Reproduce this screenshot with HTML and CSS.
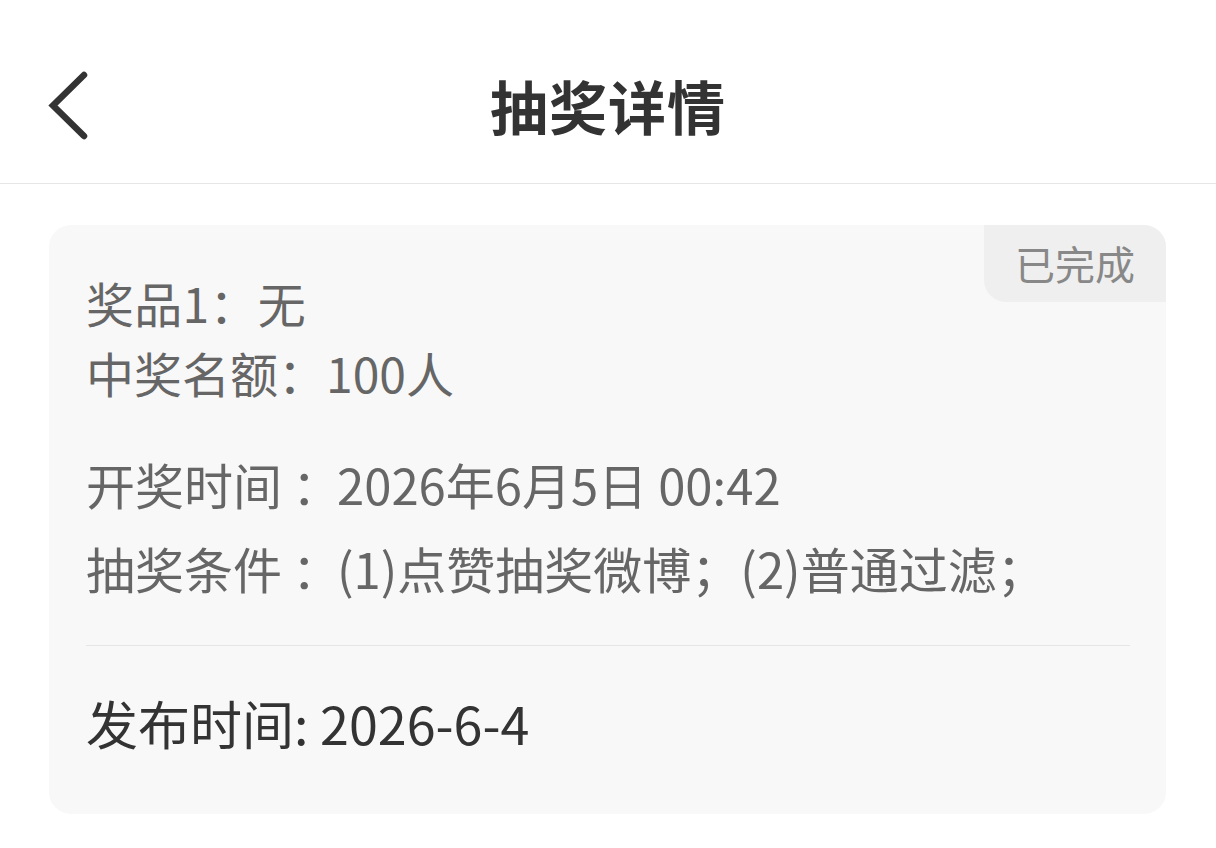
FILE: index.html
```html
<!DOCTYPE html>
<html lang="zh">
<head>
<meta charset="utf-8">
<link rel="stylesheet" href="styles.css">
</head>
<body>
<header class="nav">
  <a class="back" href="#" aria-label="返回">
    <svg width="44" height="70" viewBox="0 0 44 70"><path d="M38 4 L7 34.5 L38 65" fill="none" stroke="#333" stroke-width="6.5" stroke-linecap="round" stroke-linejoin="miter"/></svg>
  </a>
  <h1 class="title">抽奖详情</h1>
</header>
<main class="page">
  <section class="card">
    <span class="badge">已完成</span>
    <div class="group prize">
      <p class="row">奖品1：无</p>
      <p class="row">中奖名额：100人</p>
    </div>
    <div class="group info">
      <p class="row">开奖时间<span class="colon">：</span>2026年6月5日 00:42</p>
      <p class="row">抽奖条件<span class="colon">：</span>(1)点赞抽奖微博；(2)普通过滤；</p>
    </div>
    <div class="divider"></div>
    <p class="publish">发布时间: 2026-6-4</p>
  </section>
</main>
</body>
</html>
```
FILE: styles.css
```css
* { box-sizing: border-box; }
html, body { margin: 0; padding: 0; background: #fff; }
body {
  font-family: "Noto Sans CJK SC", "Noto Sans", sans-serif;
  color: #333;
}
.nav {
  height: 184px;
  border-bottom: 1px solid #e6e6e6;
  display: flex;
  align-items: center;
  justify-content: center;
  position: relative;
}
.back {
  position: absolute;
  left: 46px;
  top: 71px;
  display: block;
  width: 44px;
  height: 70px;
}
.back svg { display: block; }
.title {
  margin: 0;
  font-size: 58px;
  font-weight: 700;
  color: #333;
  letter-spacing: 1px;
  padding-top: 26px;
}
.page {
  padding: 41px 50px 0 49px;
}
.card {
  position: relative;
  background: #f8f8f8;
  border-radius: 22px;
  padding: 42px 36px 58px 37px;
}
.badge {
  position: absolute;
  top: 0;
  right: 0;
  width: 182px;
  height: 77px;
  background: #efefef;
  color: #888;
  font-size: 40px;
  line-height: 77px;
  text-align: center;
  border-radius: 0 22px 0 22px;
}
.row {
  margin: 0;
  font-size: 48px;
  color: #666;
}
.prize .row { line-height: 70px; }
.prize .row:first-child { letter-spacing: 0.3px; }
.info { margin-top: 35px; }
.info .row { line-height: 84px; font-size: 49px; }
.colon { font-family: "Noto Sans CJK JP", sans-serif; padding-left: 10px; margin-right: -4px; }
.divider {
  height: 1px;
  background: #e6e6e6;
  margin-top: 35px;
}
.publish {
  margin: 44px 0 0;
  font-size: 52px;
  line-height: 66px;
  color: #333;
}
```
